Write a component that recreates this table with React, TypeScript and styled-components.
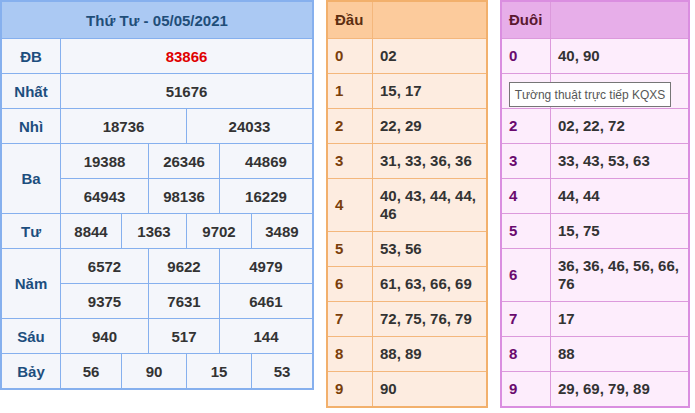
import styled, { createGlobalStyle } from 'styled-components';

const GlobalStyle = createGlobalStyle`
  html, body {
    margin: 0;
    padding: 0;
    background: #ffffff;
  }
  body {
    font-family: 'Liberation Sans', Arial, sans-serif;
  }
`;

const Page = styled.div`
  display: flex;
  align-items: flex-start;
  gap: 12px;
  width: 695px;
  height: 413px;
  overflow: hidden;
`;

/* ---------- results table ---------- */

const ResultGrid = styled.div`
  display: grid;
  width: 314px;
  box-sizing: border-box;
  border: 2px solid #86b0ee;
  background: #86b0ee;
  gap: 1px;
  grid-template-columns:
    58px repeat(3, calc(58px / 3)) 26px 18px 18px 15.5px 15.5px 31px
    repeat(3, calc(58px / 3));
  grid-template-rows: 36px repeat(10, 34px);
  font-size: 15px;
  font-weight: bold;
`;

const DateHeader = styled.div`
  grid-column: 1 / -1;
  background: #abc9f3;
  color: #1f4e79;
  display: flex;
  align-items: center;
  justify-content: center;
`;

const PrizeLabel = styled.div<{ rows?: number }>`
  grid-column: 1;
  grid-row: span ${(p) => p.rows || 1};
  background: #f4f6fb;
  color: #1d4e7e;
  display: flex;
  align-items: center;
  justify-content: center;
`;

const Num = styled.div<{ span: number; special?: boolean }>`
  grid-column: span ${(p) => p.span};
  background: #f4f6fb;
  color: ${(p) => (p.special ? '#e00000' : '#333333')};
  display: flex;
  align-items: center;
  justify-content: center;
`;

type Prize = { label: string; rows: string[][]; special?: boolean };

const prizes: Prize[] = [
  { label: 'ĐB', rows: [['83866']], special: true },
  { label: 'Nhất', rows: [['51676']] },
  { label: 'Nhì', rows: [['18736', '24033']] },
  {
    label: 'Ba',
    rows: [
      ['19388', '26346', '44869'],
      ['64943', '98136', '16229'],
    ],
  },
  { label: 'Tư', rows: [['8844', '1363', '9702', '3489']] },
  {
    label: 'Năm',
    rows: [
      ['6572', '9622', '4979'],
      ['9375', '7631', '6461'],
    ],
  },
  { label: 'Sáu', rows: [['940', '517', '144']] },
  { label: 'Bảy', rows: [['56', '90', '15', '53']] },
];

function ResultTable() {
  return (
    <ResultGrid>
      <DateHeader>Thứ Tư - 05/05/2021</DateHeader>
      {prizes.map((p) => [
        <PrizeLabel key={p.label} rows={p.rows.length}>
          {p.label}
        </PrizeLabel>,
        ...p.rows.flatMap((row, ri) =>
          row.map((n, i) => (
            <Num key={`${p.label}-${ri}-${i}`} span={12 / row.length} special={p.special}>
              {n}
            </Num>
          ))
        ),
      ])}
    </ResultGrid>
  );
}

/* ---------- loto head / tail tables ---------- */

type Palette = {
  border: string;
  line: string;
  head: string;
  cell: string;
  key: string;
  title: string;
};

const orange: Palette = {
  border: '#f2b06c',
  line: '#f4b77c',
  head: '#fccb9c',
  cell: '#fdece0',
  key: '#7a3e0b',
  title: '#5c2e10',
};

const purple: Palette = {
  border: '#da8ee0',
  line: '#dc99dc',
  head: '#e7aee9',
  cell: '#fdedfc',
  key: '#6a0a6e',
  title: '#5a1830',
};

const LotoWrap = styled.div<{ width: number }>`
  position: relative;
  width: ${(p) => p.width}px;
`;

const LotoGrid = styled.div<{ pal: Palette; keyCol: number }>`
  display: grid;
  grid-template-columns: ${(p) => p.keyCol}px 1fr;
  gap: 1px;
  box-sizing: border-box;
  border: 2px solid ${(p) => p.pal.border};
  background: ${(p) => p.pal.line};
  font-size: 15px;
  font-weight: bold;
  line-height: 18px;
`;

const LotoHead = styled.div<{ pal: Palette }>`
  height: 36px;
  box-sizing: border-box;
  padding: 0 7px;
  display: flex;
  align-items: center;
  background: ${(p) => p.pal.head};
  color: ${(p) => p.pal.title};
`;

const LotoKey = styled.div<{ pal: Palette }>`
  padding: 8px 7px;
  display: flex;
  align-items: center;
  background: ${(p) => p.pal.cell};
  color: ${(p) => p.pal.key};
`;

const LotoValue = styled.div<{ pal: Palette }>`
  padding: 8px 6px 8px 7px;
  display: flex;
  align-items: center;
  background: ${(p) => p.pal.cell};
  color: #333333;
`;

const Tooltip = styled.div`
  position: absolute;
  left: 9px;
  top: 82px;
  width: 162px;
  height: 25px;
  box-sizing: border-box;
  border: 1px solid #767676;
  background: #ffffff;
  color: #575757;
  font-size: 12px;
  font-weight: normal;
  display: flex;
  align-items: center;
  justify-content: center;
  white-space: nowrap;
`;

type LotoProps = {
  title: string;
  pal: Palette;
  width: number;
  keyCol: number;
  values: string[];
  tooltip?: string;
};

function LotoTable({ title, pal, width, keyCol, values, tooltip }: LotoProps) {
  return (
    <LotoWrap width={width}>
      <LotoGrid pal={pal} keyCol={keyCol}>
        <LotoHead pal={pal}>{title}</LotoHead>
        <LotoHead pal={pal} />
        {values.map((v, i) => [
          <LotoKey key={`k${i}`} pal={pal}>
            {i}
          </LotoKey>,
          <LotoValue key={`v${i}`} pal={pal}>
            {v}
          </LotoValue>,
        ])}
      </LotoGrid>
      {tooltip && <Tooltip>{tooltip}</Tooltip>}
    </LotoWrap>
  );
}

const heads = [
  '02',
  '15, 17',
  '22, 29',
  '31, 33, 36, 36',
  '40, 43, 44, 44, 46',
  '53, 56',
  '61, 63, 66, 69',
  '72, 75, 76, 79',
  '88, 89',
  '90',
];

const tails = [
  '40, 90',
  '31, 61',
  '02, 22, 72',
  '33, 43, 53, 63',
  '44, 44',
  '15, 75',
  '36, 36, 46, 56, 66, 76',
  '17',
  '88',
  '29, 69, 79, 89',
];

export default function App() {
  return (
    <>
      <GlobalStyle />
      <Page>
        <ResultTable />
        <LotoTable title="Đầu" pal={orange} width={162} keyCol={44} values={heads} />
        <LotoTable
          title="Đuôi"
          pal={purple}
          width={190}
          keyCol={48}
          values={tails}
          tooltip="Tường thuật trực tiếp KQXS"
        />
      </Page>
    </>
  );
}
